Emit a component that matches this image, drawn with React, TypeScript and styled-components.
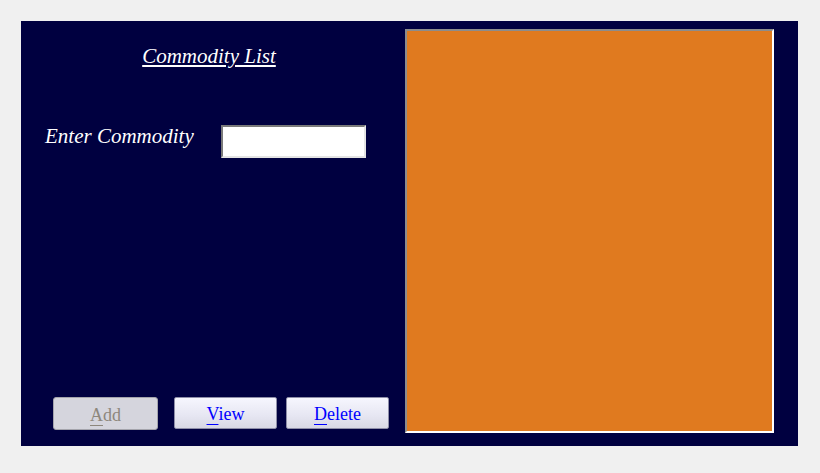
import React from "react";
import styled, { createGlobalStyle } from "styled-components";

const Global = createGlobalStyle`
  html, body { margin: 0; padding: 0; background: #f0f0f0; }
  body { font-family: "Liberation Serif", "Times New Roman", serif; }
`;

const Page = styled.div`
  padding: 21px 0 0 21px;
`;

const Panel = styled.div`
  display: flex;
  width: 777px;
  height: 425px;
  background: #000040;
  box-sizing: border-box;
`;

const LeftColumn = styled.div`
  display: flex;
  flex-direction: column;
  width: 376px;
  margin-right: 8px;
  padding-top: 23px;
  padding-bottom: 16px;
  box-sizing: border-box;
`;

const Title = styled.h1`
  margin: 0;
  text-align: center;
  font-size: 21px;
  font-weight: normal;
  font-style: italic;
  color: #ffffff;
  text-decoration: underline;
  text-underline-offset: 2px;
  line-height: 24px;
`;

const EntryRow = styled.div`
  display: flex;
  align-items: flex-start;
  margin-top: 56px;
  padding-left: 24px;
`;

const Label = styled.label`
  width: 176px;
  font-size: 21px;
  font-style: italic;
  color: #ffffff;
  line-height: 24px;
`;

const TextInput = styled.input`
  width: 145px;
  height: 33px;
  margin-top: 1px;
  box-sizing: border-box;
  border-style: solid;
  border-width: 2px;
  border-color: #7a7a7a #e4e4e4 #e4e4e4 #7a7a7a;
  background: #ffffff;
  outline: none;
  padding: 0 4px;
`;

const Spacer = styled.div`
  flex: 1;
`;

const ButtonRow = styled.div`
  display: flex;
  align-items: flex-start;
  padding-left: 32px;
`;

const Button = styled.button<{ $gap?: number }>`
  margin-left: ${(p) => p.$gap ?? 0}px;
  width: 103px;
  height: 32px;
  box-sizing: border-box;
  font-family: "Liberation Serif", "Times New Roman", serif;
  font-size: 18px;
  color: #0000ff;
  background: linear-gradient(#f6f6fe, #e6e6f2 60%, #d8d8e4);
  border: 1px solid #8e8ea8;
  border-radius: 2px;
  padding: 3px 0 0;
  cursor: pointer;

  &:disabled {
    width: 105px;
    height: 33px;
    color: #8d877c;
    background: #d5d5dd;
    border-color: #a4a4ac;
    border-radius: 3px;
    cursor: default;
  }
`;

const Key = styled.span`
  text-decoration: underline;
  text-underline-offset: 4px;
`;

const Preview = styled.div`
  width: 369px;
  height: 404px;
  margin-top: 8px;
  box-sizing: border-box;
  background: #e07a1f;
  border-style: solid;
  border-width: 2px;
  border-color: #8c8c8c #ffffff #ffffff #8c8c8c;
`;

export default function App() {
  return (
    <>
      <Global />
      <Page>
        <Panel>
          <LeftColumn>
            <Title>Commodity List</Title>
            <EntryRow>
              <Label htmlFor="commodity">Enter Commodity</Label>
              <TextInput id="commodity" type="text" />
            </EntryRow>
            <Spacer />
            <ButtonRow>
              <Button disabled>
                <Key>A</Key>dd
              </Button>
              <Button $gap={16}>
                <Key>V</Key>iew
              </Button>
              <Button $gap={9}>
                <Key>D</Key>elete
              </Button>
            </ButtonRow>
          </LeftColumn>
          <Preview />
        </Panel>
      </Page>
    </>
  );
}
